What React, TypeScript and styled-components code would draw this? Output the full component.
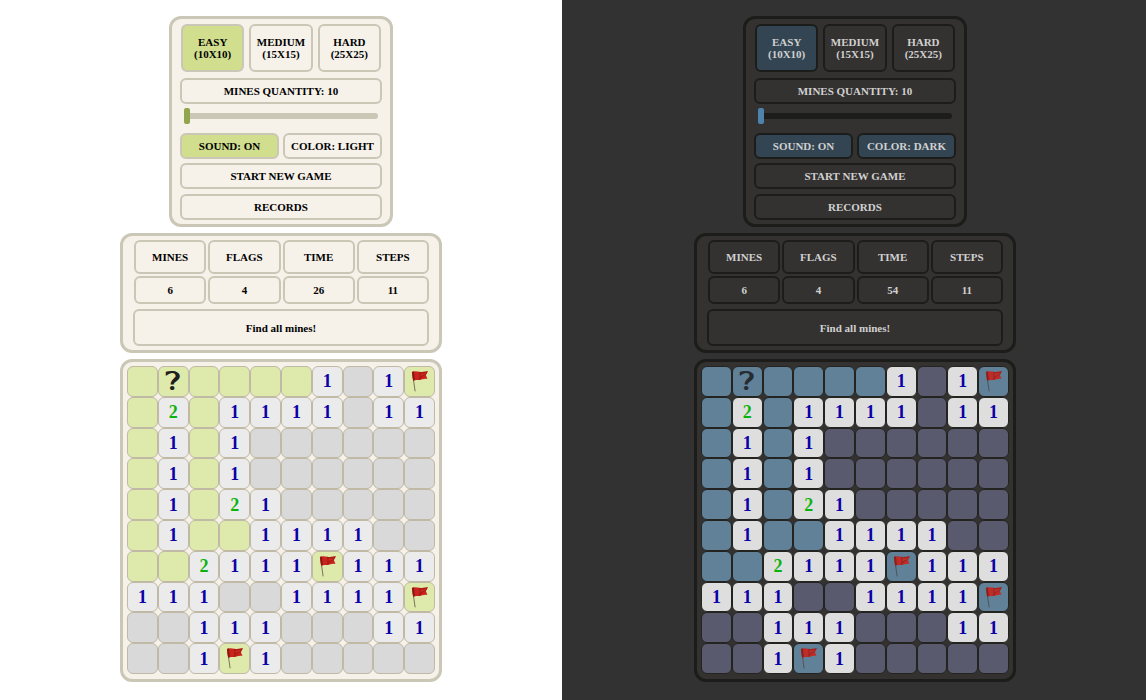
import React, { useState } from "react";
import styled, { createGlobalStyle, ThemeProvider } from "styled-components";

interface GameTheme {
  page: string;
  panel: string;
  line: string;
  active: string;
  text: string;
  thumb: string;
  hidden: string;
  empty: string;
  open: string;
  cellLine: string;
  mark: string;
  pole: string;
  flagOpacity: number;
  inset: number;
}

const light: GameTheme = {
  page: "#ffffff",
  panel: "#f6f1e9",
  line: "#cac7b7",
  active: "#d0de8e",
  text: "#000000",
  thumb: "#90a54e",
  hidden: "#dee9ac",
  empty: "#d9d9d9",
  open: "#ebebeb",
  cellLine: "#c0b9a5",
  mark: "#1e1e1c",
  pole: "#6b6450",
  flagOpacity: 1,
  inset: 0,
};

const dark: GameTheme = {
  page: "#323232",
  panel: "#343230",
  line: "#1c1d1a",
  active: "#334552",
  text: "#d0d0d0",
  thumb: "#4f83ab",
  hidden: "#618199",
  empty: "#5a5a6e",
  open: "#dedede",
  cellLine: "#232420",
  mark: "#262c31",
  pole: "#4b4a48",
  flagOpacity: 0.9,
  inset: 2,
};

type Themed = { theme: any };

const GlobalStyle = createGlobalStyle`
  *, *::before, *::after { box-sizing: border-box; }
  body { margin: 0; font-family: "Liberation Serif", "Times New Roman", serif; }
`;

const Page = styled.div`
  display: grid;
  grid-template-columns: 562fr 584fr;
  min-height: 100vh;
`;

const Side = styled.main`
  display: flex;
  flex-direction: column;
  align-items: center;
  gap: 6px;
  padding: 16px 0 18px ${(p: Themed) => p.theme.inset}px;
  background: ${(p: Themed) => p.theme.page};
  color: ${(p: Themed) => p.theme.text};
  font-size: 11px;
  line-height: 12px;
  font-weight: 700;
`;

const Panel = styled.section<{ $width: number; $padding: string }>`
  width: 100%;
  max-width: ${(p) => p.$width}px;
  padding: ${(p) => p.$padding};
  border: 3px solid ${(p) => (p.theme as GameTheme).line};
  border-radius: 12px;
  background: ${(p) => (p.theme as GameTheme).panel};
`;

const Controls = styled(Panel)`
  display: flex;
  flex-direction: column;
`;

const Levels = styled.div`
  display: flex;
  gap: 5px;
  margin: 0 1px 6px;
`;

const Pair = styled.div`
  display: flex;
  gap: 4px;
  margin-bottom: 4px;
`;

const Button = styled.button<{ $active?: boolean; $height?: number }>`
  flex: 1 1 0;
  min-width: 0;
  min-height: ${(p) => p.$height ?? 26}px;
  padding: 0;
  border: 2px solid ${(p) => (p.theme as GameTheme).line};
  border-radius: 6px;
  background: ${(p) => ((p.theme as GameTheme)[p.$active ? "active" : "panel"])};
  color: inherit;
  font: inherit;
  cursor: pointer;
`;

const Menu = styled.div`
  display: flex;
  flex-direction: column;
  gap: 5px;
`;

const Quantity = styled.label`
  display: flex;
  align-items: center;
  justify-content: center;
  height: 26px;
  border: 2px solid ${(p: Themed) => p.theme.line};
  border-radius: 6px;
`;

const Slider = styled.input`
  appearance: none;
  height: 16px;
  margin: 4px 4px 9px;
  background: transparent;

  &::-webkit-slider-runnable-track {
    height: 6px;
    border-radius: 3px;
    background: ${(p: Themed) => p.theme.line};
  }
  &::-webkit-slider-thumb {
    appearance: none;
    width: 6px;
    height: 16px;
    margin-top: -5px;
    border-radius: 2px;
    background: ${(p: Themed) => p.theme.thumb};
  }
`;

const Stats = styled.table`
  width: 100%;
  table-layout: fixed;
  border-collapse: separate;
  border-spacing: 2px;

  th,
  td {
    padding: 0;
    border: 2px solid ${(p: Themed) => p.theme.line};
    border-radius: 6px;
    text-align: center;
    font-weight: 700;
  }
  th {
    height: 34px;
  }
  td {
    height: 28px;
  }
`;

const Message = styled.p`
  display: flex;
  align-items: center;
  justify-content: center;
  min-height: 37px;
  margin: 3px 2px 0 1px;
  border: 2px solid ${(p: Themed) => p.theme.line};
  border-radius: 6px;
`;

const Board = styled.div`
  display: grid;
  grid-template-columns: repeat(10, 1fr);
  grid-template-rows: repeat(10, 1fr);
  aspect-ratio: 1;
`;

type CellKind = "hidden" | "empty" | "open";

const Cell = styled.button<{ $kind: CellKind; $color?: string }>`
  display: flex;
  align-items: center;
  justify-content: center;
  min-width: 0;
  min-height: 0;
  padding: 0;
  border: 1px solid ${(p) => (p.theme as GameTheme).cellLine};
  border-radius: 6px;
  background: ${(p) => (p.theme as GameTheme)[p.$kind]};
  color: ${(p) => p.$color ?? (p.theme as GameTheme).mark};
  font-family: inherit;
  font-size: 18px;
  line-height: 20px;
  font-weight: 700;
  cursor: pointer;
`;

const MarkedCell = styled(Cell)`
  font-family: "DejaVu Sans", sans-serif;
  font-size: 26px;
  line-height: 28px;
  font-weight: 400;
  font-variant-emoji: text;
`;

const FlagDrawing = styled.svg`
  display: block;
  width: 100%;
  height: 100%;
  opacity: ${(p: Themed) => p.theme.flagOpacity};

  .pole {
    stroke: ${(p: Themed) => p.theme.pole};
  }
`;

const Flag = () => (
  <FlagDrawing viewBox="1 1 29 29" aria-hidden="true">
    <path className="pole" d="M8.4 6 L11.2 25.5" strokeWidth="0.9" fill="none" />
    <path
      d="M8 6 C10.5 5 12.5 5.2 15 5.8 C18 6.5 20.5 6 24 5.4 L22 9 L23.6 13 C20 12.4 18 13.8 15 14 C12.8 14 11 13.8 9.2 14.8 Z"
      fill="#c9231b"
    />
    <path d="M8 6 L10 5.4 L11 14.1 L9.2 14.8 Z" fill="#8c1712" />
    <path
      d="M15 5.8 C18 6.5 20.5 6 24 5.4 L22 9 C20 9.4 18 10.4 16.4 13.8 L15 14 C15.6 11 15.8 8 15 5.8 Z"
      fill="#a81b15"
    />
    <path d="M16.8 7.4 C19 7.8 20.6 7.4 22.4 6.9 L21.3 8.6 C19.2 8.8 17.8 9.4 16.8 11 Z" fill="#cc2a20" />
  </FlagDrawing>
);

/* "." closed, "_" opened with no neighbours, "F" flagged, "?" marked */
const FIELD = [
  ".?....1_1F",
  ".2.1111_11",
  ".1.1______",
  ".1.1______",
  ".1.21_____",
  ".1..1111__",
  "..2111F111",
  "111__1111F",
  "__111___11",
  "__1F1_____",
];

const DIGIT_COLORS: Record<string, string> = { "1": "#0a00a8", "2": "#0db30d" };

const LEVELS = [
  ["EASY", "(10X10)"],
  ["MEDIUM", "(15X15)"],
  ["HARD", "(25X25)"],
];

const renderCell = (mark: string, key: string) => {
  if (mark === ".") return <Cell key={key} $kind="hidden" aria-label="Closed" />;
  if (mark === "_") return <Cell key={key} $kind="empty" aria-label="Empty" />;
  if (mark === "F")
    return (
      <Cell key={key} $kind="hidden" aria-label="Flag">
        <Flag />
      </Cell>
    );
  if (mark === "?")
    return (
      <MarkedCell key={key} $kind="hidden">
        {"\u2753\uFE0E"}
      </MarkedCell>
    );
  return (
    <Cell key={key} $kind="open" $color={DIGIT_COLORS[mark]}>
      {mark}
    </Cell>
  );
};

interface GameProps {
  id: string;
  theme: GameTheme;
  colorName: string;
  time: number;
}

const Game = ({ id, theme, colorName, time }: GameProps) => {
  const [mines, setMines] = useState(10);
  const [level, setLevel] = useState(0);
  const [sound, setSound] = useState(true);

  return (
    <ThemeProvider theme={theme}>
      <Side>
        <Controls $width={224} $padding="5px 8px 4px">
          <Levels>
            {LEVELS.map(([name, size], i) => (
              <Button key={name} $height={48} $active={i === level} onClick={() => setLevel(i)}>
                {name}
                <br />
                {size}
              </Button>
            ))}
          </Levels>
          <Quantity htmlFor={id}>MINES QUANTITY: {mines}</Quantity>
          <Slider
            id={id}
            type="range"
            min={10}
            max={99}
            value={mines}
            onChange={(e) => setMines(Number(e.target.value))}
          />
          <Pair>
            <Button $active={sound} onClick={() => setSound(!sound)}>
              SOUND: {sound ? "ON" : "OFF"}
            </Button>
            <Button $active={colorName === "DARK"}>COLOR: {colorName}</Button>
          </Pair>
          <Menu>
            <Button>START NEW GAME</Button>
            <Button>RECORDS</Button>
          </Menu>
        </Controls>
        <Panel $width={322} $padding="2px 8px 4px 9px">
          <Stats>
            <thead>
              <tr>
                <th scope="col">MINES</th>
                <th scope="col">FLAGS</th>
                <th scope="col">TIME</th>
                <th scope="col">STEPS</th>
              </tr>
            </thead>
            <tbody>
              <tr>
                <td>6</td>
                <td>4</td>
                <td>{time}</td>
                <td>11</td>
              </tr>
            </tbody>
          </Stats>
          <Message>Find all mines!</Message>
        </Panel>
        <Panel $width={322} $padding="4px 4px 5px">
          <Board>{FIELD.flatMap((row, y) => [...row].map((mark, x) => renderCell(mark, `${x}-${y}`)))}</Board>
        </Panel>
      </Side>
    </ThemeProvider>
  );
};

export default function App() {
  return (
    <>
      <GlobalStyle />
      <Page>
        <Game id="mines-light" theme={light} colorName="LIGHT" time={26} />
        <Game id="mines-dark" theme={dark} colorName="DARK" time={54} />
      </Page>
    </>
  );
}
